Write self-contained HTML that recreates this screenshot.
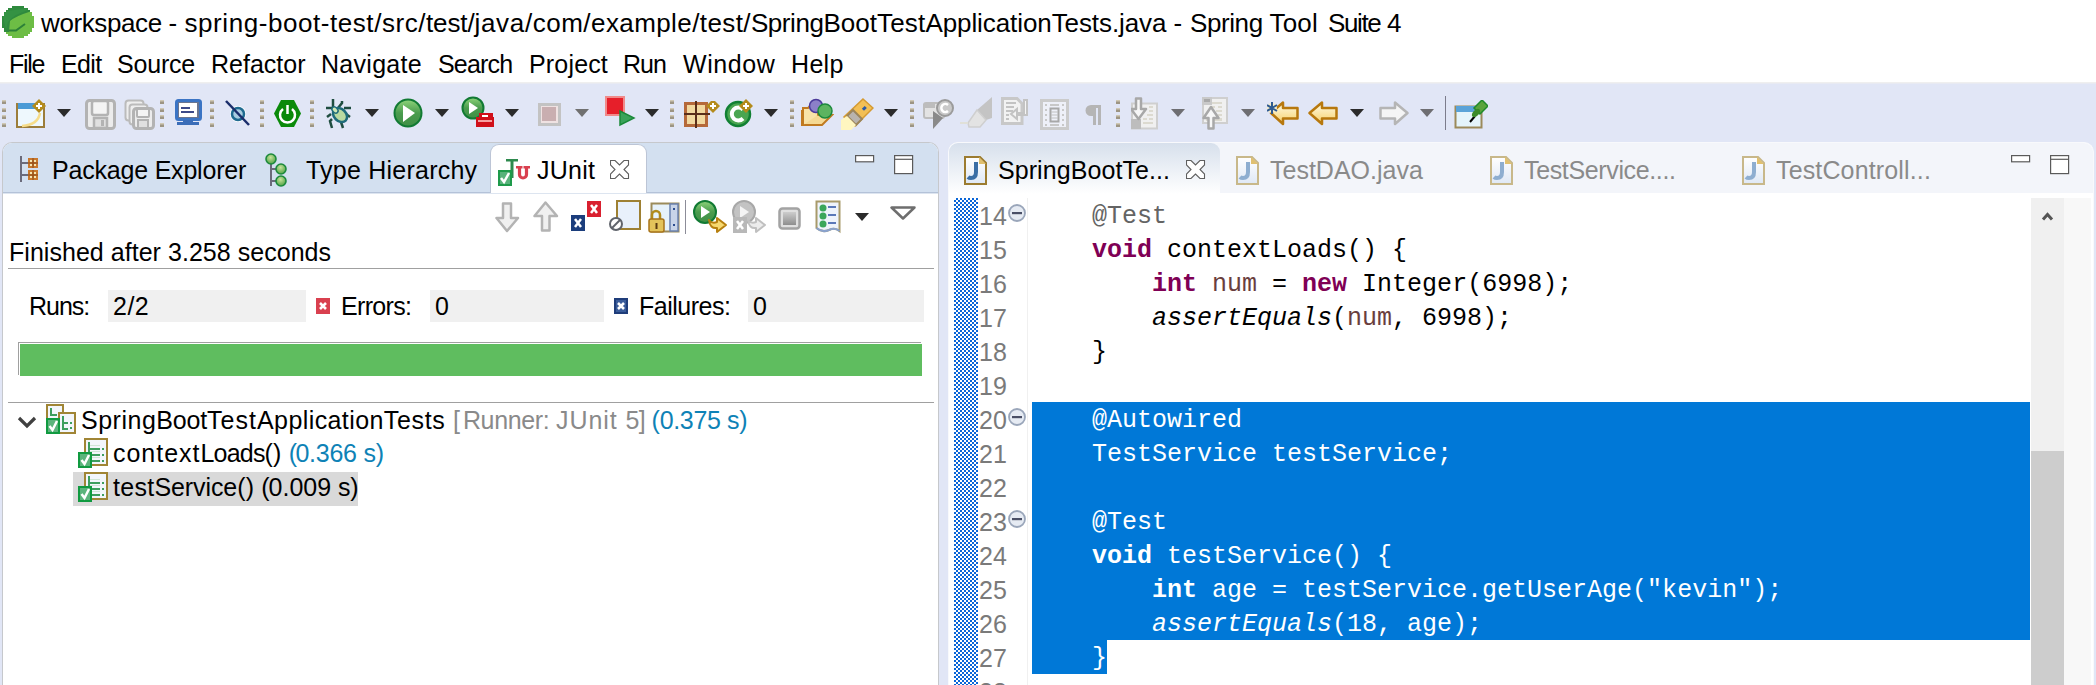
<!DOCTYPE html>
<html><head><meta charset="utf-8"><style>
html,body{margin:0;padding:0;}
body{width:2096px;height:685px;overflow:hidden;position:relative;background:#fff;font-family:"Liberation Sans",sans-serif;}
.t{position:absolute;white-space:pre;}
.r{position:absolute;}
</style></head><body>
<div class="r" style="left:0px;top:82px;width:2096px;height:603px;background:#e1e6f6;"></div>
<div class="r" style="left:0px;top:82px;width:2096px;height:1px;background:#efefef;"></div>
<div class="r" style="left:0px;top:83px;width:2096px;height:1px;background:#e8eaf2;"></div>
<div class="t" style="left:41px;top:10px;font-size:26px;line-height:26px;letter-spacing:-0.387px;color:#000;">workspace </div>
<div class="t" style="left:168.6px;top:10px;font-size:26px;line-height:26px;letter-spacing:0.013px;color:#000;">- </div>
<div class="t" style="left:184.5px;top:10px;font-size:26px;line-height:26px;letter-spacing:0.563px;color:#000;">spring-boot-test/src/</div>
<div class="t" style="left:426px;top:10px;font-size:26px;line-height:26px;letter-spacing:-0.122px;color:#000;">test/</div>
<div class="t" style="left:474.5px;top:10px;font-size:26px;line-height:26px;letter-spacing:0.679px;color:#000;">java/</div>
<div class="t" style="left:532.8px;top:10px;font-size:26px;line-height:26px;letter-spacing:0.468px;color:#000;">com/</div>
<div class="t" style="left:591px;top:10px;font-size:26px;line-height:26px;letter-spacing:0.416px;color:#000;">example/</div>
<div class="t" style="left:699.8px;top:10px;font-size:26px;line-height:26px;letter-spacing:0.398px;color:#000;">test/</div>
<div class="t" style="left:750.9px;top:10px;font-size:26px;line-height:26px;letter-spacing:-0.423px;color:#000;">Spring</div>
<div class="t" style="left:823.5px;top:10px;font-size:26px;line-height:26px;letter-spacing:0.008px;color:#000;">Boot</div>
<div class="t" style="left:877px;top:10px;font-size:26px;line-height:26px;letter-spacing:0.182px;color:#000;">Test</div>
<div class="t" style="left:925.4px;top:10px;font-size:26px;line-height:26px;letter-spacing:-0.085px;color:#000;">ApplicationTests.java </div>
<div class="t" style="left:1173.5px;top:10px;font-size:26px;line-height:26px;letter-spacing:0.312px;color:#000;">- </div>
<div class="t" style="left:1190px;top:10px;font-size:26px;line-height:26px;letter-spacing:-0.408px;color:#000;">Spring </div>
<div class="t" style="left:1269.5px;top:10px;font-size:26px;line-height:26px;letter-spacing:0.167px;color:#000;">Tool</div>
<div class="t" style="left:1328px;top:10px;font-size:26px;line-height:26px;letter-spacing:-1.400px;color:#000;">Suite</div>
<div class="t" style="left:1387px;top:10px;font-size:26px;line-height:26px;letter-spacing:4.600px;color:#000;">4</div>
<div class="t" style="left:9px;top:52px;font-size:25px;line-height:25px;letter-spacing:-1.333px;color:#000;font-family:"Liberation Sans", sans-serif;">File</div>
<div class="t" style="left:61px;top:52px;font-size:25px;line-height:25px;letter-spacing:-0.667px;color:#000;font-family:"Liberation Sans", sans-serif;">Edit</div>
<div class="t" style="left:117px;top:52px;font-size:25px;line-height:25px;letter-spacing:-0.200px;color:#000;font-family:"Liberation Sans", sans-serif;">Source</div>
<div class="t" style="left:211px;top:52px;font-size:25px;line-height:25px;letter-spacing:0.000px;color:#000;font-family:"Liberation Sans", sans-serif;">Refactor</div>
<div class="t" style="left:321px;top:52px;font-size:25px;line-height:25px;letter-spacing:0.286px;color:#000;font-family:"Liberation Sans", sans-serif;">Navigate</div>
<div class="t" style="left:438px;top:52px;font-size:25px;line-height:25px;letter-spacing:-0.800px;color:#000;font-family:"Liberation Sans", sans-serif;">Search</div>
<div class="t" style="left:529px;top:52px;font-size:25px;line-height:25px;letter-spacing:0.167px;color:#000;font-family:"Liberation Sans", sans-serif;">Project</div>
<div class="t" style="left:623px;top:52px;font-size:25px;line-height:25px;letter-spacing:-1.000px;color:#000;font-family:"Liberation Sans", sans-serif;">Run</div>
<div class="t" style="left:683px;top:52px;font-size:25px;line-height:25px;letter-spacing:0.600px;color:#000;font-family:"Liberation Sans", sans-serif;">Window</div>
<div class="t" style="left:791px;top:52px;font-size:25px;line-height:25px;letter-spacing:0.333px;color:#000;font-family:"Liberation Sans", sans-serif;">Help</div>
<div class="r" style="left:2px;top:142px;width:937px;height:543px;background:#ffffff;border:1px solid #c6c8cc;border-bottom:none;box-sizing:border-box;border-top-left-radius:10px;border-top-right-radius:10px;"></div>
<div class="r" style="left:3px;top:143px;width:935px;height:49px;background:#d3e0f0;border-top-left-radius:9px;border-top-right-radius:9px;"></div>
<div class="r" style="left:3px;top:192px;width:935px;height:1px;background:#b4c2d8;"></div>
<div class="r" style="left:3px;top:193px;width:935px;height:1px;background:#dde5f0;"></div>
<div class="r" style="left:490px;top:144px;width:157px;height:49px;background:#ffffff;border:1px solid #bcc5d6;border-bottom:none;box-sizing:border-box;border-top-left-radius:9px;border-top-right-radius:9px;"></div>
<div class="t" style="left:52px;top:158px;font-size:25px;line-height:25px;letter-spacing:-0.200px;color:#000;font-family:"Liberation Sans", sans-serif;">Package Explorer</div>
<div class="t" style="left:306px;top:158px;font-size:25px;line-height:25px;letter-spacing:0.231px;color:#000;font-family:"Liberation Sans", sans-serif;">Type Hierarchy</div>
<div class="t" style="left:537px;top:158px;font-size:25px;line-height:25px;letter-spacing:0.250px;color:#000;font-family:"Liberation Sans", sans-serif;">JUnit</div>
<div class="t" style="left:9px;top:240px;font-size:25px;line-height:25px;letter-spacing:0.037px;color:#000;font-family:"Liberation Sans", sans-serif;">Finished after 3.258 seconds</div>
<div class="r" style="left:8px;top:268px;width:926px;height:1px;background:#a0a0a0;"></div>
<div class="t" style="left:29px;top:294px;font-size:25px;line-height:25px;letter-spacing:-1.000px;color:#000;font-family:"Liberation Sans", sans-serif;">Runs:</div>
<div class="r" style="left:108px;top:290px;width:198px;height:32px;background:#f0f0f0;"></div>
<div class="t" style="left:113px;top:294px;font-size:25px;line-height:25px;letter-spacing:0.500px;color:#000;font-family:"Liberation Sans", sans-serif;">2/2</div>
<div class="t" style="left:341px;top:294px;font-size:25px;line-height:25px;letter-spacing:-0.667px;color:#000;font-family:"Liberation Sans", sans-serif;">Errors:</div>
<div class="r" style="left:430px;top:290px;width:174px;height:32px;background:#f0f0f0;"></div>
<div class="t" style="left:435px;top:294px;font-size:25px;line-height:25px;letter-spacing:0.000px;color:#000;font-family:"Liberation Sans", sans-serif;">0</div>
<div class="t" style="left:639px;top:294px;font-size:25px;line-height:25px;letter-spacing:-0.500px;color:#000;font-family:"Liberation Sans", sans-serif;">Failures:</div>
<div class="r" style="left:748px;top:290px;width:176px;height:32px;background:#f0f0f0;"></div>
<div class="t" style="left:753px;top:294px;font-size:25px;line-height:25px;letter-spacing:0.000px;color:#000;font-family:"Liberation Sans", sans-serif;">0</div>
<div class="r" style="left:18px;top:342px;width:903px;height:1px;background:#a0a0a0;"></div>
<div class="r" style="left:18px;top:342px;width:1px;height:33px;background:#a0a0a0;"></div>
<div class="r" style="left:20px;top:344px;width:902px;height:32px;background:#5fbd5f;"></div>
<div class="r" style="left:8px;top:402px;width:926px;height:1px;background:#a0a0a0;"></div>
<div class="r" style="left:73px;top:472px;width:285px;height:34px;background:#d9d9d9;"></div>
<div class="t" style="left:81px;top:408px;font-size:25px;line-height:25px;letter-spacing:0.506px;color:#000;">Spring</div>
<div class="t" style="left:156.3px;top:408px;font-size:25px;line-height:25px;letter-spacing:-0.209px;color:#000;">Boot</div>
<div class="t" style="left:206.9px;top:408px;font-size:25px;line-height:25px;letter-spacing:1.060px;color:#000;">Test</div>
<div class="t" style="left:257px;top:408px;font-size:25px;line-height:25px;letter-spacing:0.409px;color:#000;">Application</div>
<div class="t" style="left:383.8px;top:408px;font-size:25px;line-height:25px;letter-spacing:0.648px;color:#000;">Tests </div>
<div class="t" style="left:453px;top:408px;font-size:25px;line-height:25px;letter-spacing:2.947px;color:#8a8a8a;">[</div>
<div class="t" style="left:462.9px;top:408px;font-size:25px;line-height:25px;letter-spacing:-0.351px;color:#8a8a8a;">Runner: </div>
<div class="t" style="left:556px;top:408px;font-size:25px;line-height:25px;letter-spacing:0.932px;color:#8a8a8a;">JUnit </div>
<div class="t" style="left:625.5px;top:408px;font-size:25px;line-height:25px;letter-spacing:-0.604px;color:#8a8a8a;">5] </div>
<div class="t" style="left:651.5px;top:408px;font-size:25px;line-height:25px;letter-spacing:-0.028px;color:#0e82b6;">(</div>
<div class="t" style="left:659.8px;top:408px;font-size:25px;line-height:25px;letter-spacing:-0.389px;color:#0e82b6;">0.375 </div>
<div class="t" style="left:727px;top:408px;font-size:25px;line-height:25px;letter-spacing:-0.300px;color:#0e82b6;">s)</div>
<div class="t" style="left:113px;top:441px;font-size:25px;line-height:25px;letter-spacing:0.982px;color:#000;">context</div>
<div class="t" style="left:200.5px;top:441px;font-size:25px;line-height:25px;letter-spacing:-0.805px;color:#000;">Loads</div>
<div class="t" style="left:264.6px;top:441px;font-size:25px;line-height:25px;letter-spacing:0.164px;color:#000;">() </div>
<div class="t" style="left:288.7px;top:441px;font-size:25px;line-height:25px;letter-spacing:-1.628px;color:#0e82b6;">(</div>
<div class="t" style="left:295.4px;top:441px;font-size:25px;line-height:25px;letter-spacing:-0.239px;color:#0e82b6;">0.366 </div>
<div class="t" style="left:363.5px;top:441px;font-size:25px;line-height:25px;letter-spacing:-0.300px;color:#0e82b6;">s)</div>
<div class="t" style="left:113px;top:475px;font-size:25px;line-height:25px;letter-spacing:0.272px;color:#000;">test</div>
<div class="t" style="left:154.4px;top:475px;font-size:25px;line-height:25px;letter-spacing:-0.080px;color:#000;">Service</div>
<div class="t" style="left:237.2px;top:475px;font-size:25px;line-height:25px;letter-spacing:0.164px;color:#000;">() </div>
<div class="t" style="left:261.3px;top:475px;font-size:25px;line-height:25px;letter-spacing:-1.028px;color:#000;">(</div>
<div class="t" style="left:268.6px;top:475px;font-size:25px;line-height:25px;letter-spacing:-0.022px;color:#000;">0.009 </div>
<div class="t" style="left:338px;top:475px;font-size:25px;line-height:25px;letter-spacing:-0.300px;color:#000;">s)</div>
<div class="r" style="left:948px;top:142px;width:1146px;height:543px;background:#ffffff;border:1px solid #f8f9fc;border-bottom:none;box-sizing:border-box;border-top-left-radius:10px;border-top-right-radius:10px;"></div>
<div class="r" style="left:949px;top:143px;width:1144px;height:50px;background:#f3f5fa;border-top-left-radius:9px;border-top-right-radius:9px;"></div>
<div class="r" style="left:949px;top:143px;width:271px;height:51px;background:linear-gradient(#d7e0ec,#ffffff);border-top-left-radius:9px;border-top-right-radius:9px;"></div>
<div class="t" style="left:998px;top:158px;font-size:25px;line-height:25px;letter-spacing:0.071px;color:#000;font-family:"Liberation Sans", sans-serif;">SpringBootTe...</div>
<div class="t" style="left:1270px;top:158px;font-size:25px;line-height:25px;letter-spacing:0.000px;color:#8a8a8a;font-family:"Liberation Sans", sans-serif;">TestDAO.java</div>
<div class="t" style="left:1524px;top:158px;font-size:25px;line-height:25px;letter-spacing:-0.357px;color:#8a8a8a;font-family:"Liberation Sans", sans-serif;">TestService....</div>
<div class="t" style="left:1776px;top:158px;font-size:25px;line-height:25px;letter-spacing:0.143px;color:#8a8a8a;font-family:"Liberation Sans", sans-serif;">TestControll...</div>
<div class="r" style="left:954px;top:198px;width:24px;height:487px;background-image:conic-gradient(#0a66d8 25%,#fff 0 50%,#0a66d8 0 75%,#fff 0);background-size:4px 4px;"></div>
<div class="r" style="left:1027px;top:198px;width:1px;height:487px;background:#f0f0f0;"></div>
<div class="r" style="left:2031px;top:198px;width:33px;height:487px;background:#f0f0f0;"></div>
<div class="r" style="left:2031px;top:451px;width:33px;height:234px;background:#cdcdcd;"></div>
<div class="r" style="left:2064px;top:198px;width:27px;height:487px;background:#f8f8f8;"></div>
<div class="r" style="left:1032px;top:402px;width:998px;height:238px;background:#0078d7;"></div>
<div class="r" style="left:1032px;top:640px;width:75px;height:34px;background:#0078d7;"></div>
<div class="t" style="left:979px;top:204px;font-size:25px;line-height:25px;letter-spacing:0.000px;color:#7a7a7a;font-family:"Liberation Mono", monospace;">14</div>
<div class="t" style="left:979px;top:238px;font-size:25px;line-height:25px;letter-spacing:0.000px;color:#7a7a7a;font-family:"Liberation Mono", monospace;">15</div>
<div class="t" style="left:979px;top:272px;font-size:25px;line-height:25px;letter-spacing:0.000px;color:#7a7a7a;font-family:"Liberation Mono", monospace;">16</div>
<div class="t" style="left:979px;top:306px;font-size:25px;line-height:25px;letter-spacing:0.000px;color:#7a7a7a;font-family:"Liberation Mono", monospace;">17</div>
<div class="t" style="left:979px;top:340px;font-size:25px;line-height:25px;letter-spacing:0.000px;color:#7a7a7a;font-family:"Liberation Mono", monospace;">18</div>
<div class="t" style="left:979px;top:374px;font-size:25px;line-height:25px;letter-spacing:0.000px;color:#7a7a7a;font-family:"Liberation Mono", monospace;">19</div>
<div class="t" style="left:979px;top:408px;font-size:25px;line-height:25px;letter-spacing:0.000px;color:#7a7a7a;font-family:"Liberation Mono", monospace;">20</div>
<div class="t" style="left:979px;top:442px;font-size:25px;line-height:25px;letter-spacing:0.000px;color:#7a7a7a;font-family:"Liberation Mono", monospace;">21</div>
<div class="t" style="left:979px;top:476px;font-size:25px;line-height:25px;letter-spacing:0.000px;color:#7a7a7a;font-family:"Liberation Mono", monospace;">22</div>
<div class="t" style="left:979px;top:510px;font-size:25px;line-height:25px;letter-spacing:0.000px;color:#7a7a7a;font-family:"Liberation Mono", monospace;">23</div>
<div class="t" style="left:979px;top:544px;font-size:25px;line-height:25px;letter-spacing:0.000px;color:#7a7a7a;font-family:"Liberation Mono", monospace;">24</div>
<div class="t" style="left:979px;top:578px;font-size:25px;line-height:25px;letter-spacing:0.000px;color:#7a7a7a;font-family:"Liberation Mono", monospace;">25</div>
<div class="t" style="left:979px;top:612px;font-size:25px;line-height:25px;letter-spacing:0.000px;color:#7a7a7a;font-family:"Liberation Mono", monospace;">26</div>
<div class="t" style="left:979px;top:646px;font-size:25px;line-height:25px;letter-spacing:0.000px;color:#7a7a7a;font-family:"Liberation Mono", monospace;">27</div>
<div class="t" style="left:979px;top:680px;font-size:25px;line-height:25px;letter-spacing:0.000px;color:#7a7a7a;font-family:"Liberation Mono", monospace;">28</div>
<div class="t" style="left:1032px;top:204px;font-family:'Liberation Mono',monospace;font-size:25px;line-height:25px;"><span style="color:#646464;">    @Test</span></div>
<div class="t" style="left:1032px;top:238px;font-family:'Liberation Mono',monospace;font-size:25px;line-height:25px;"><span style="color:#000;">    </span><span style="color:#7f0055;font-weight:bold;">void</span><span style="color:#000;"> contextLoads() {</span></div>
<div class="t" style="left:1032px;top:272px;font-family:'Liberation Mono',monospace;font-size:25px;line-height:25px;"><span style="color:#000;">        </span><span style="color:#7f0055;font-weight:bold;">int</span><span style="color:#000;"> </span><span style="color:#6a3e3e;">num</span><span style="color:#000;"> = </span><span style="color:#7f0055;font-weight:bold;">new</span><span style="color:#000;"> Integer(6998);</span></div>
<div class="t" style="left:1032px;top:306px;font-family:'Liberation Mono',monospace;font-size:25px;line-height:25px;"><span style="color:#000;">        </span><span style="color:#000;font-style:italic;">assertEquals</span><span style="color:#000;">(</span><span style="color:#6a3e3e;">num</span><span style="color:#000;">, 6998);</span></div>
<div class="t" style="left:1032px;top:340px;font-family:'Liberation Mono',monospace;font-size:25px;line-height:25px;"><span style="color:#000;">    }</span></div>
<div class="t" style="left:1032px;top:408px;font-family:'Liberation Mono',monospace;font-size:25px;line-height:25px;"><span style="color:#fff;">    @Autowired</span></div>
<div class="t" style="left:1032px;top:442px;font-family:'Liberation Mono',monospace;font-size:25px;line-height:25px;"><span style="color:#fff;">    TestService testService;</span></div>
<div class="t" style="left:1032px;top:510px;font-family:'Liberation Mono',monospace;font-size:25px;line-height:25px;"><span style="color:#fff;">    @Test</span></div>
<div class="t" style="left:1032px;top:544px;font-family:'Liberation Mono',monospace;font-size:25px;line-height:25px;"><span style="color:#fff;">    </span><span style="color:#fff;font-weight:bold;">void</span><span style="color:#fff;"> testService() {</span></div>
<div class="t" style="left:1032px;top:578px;font-family:'Liberation Mono',monospace;font-size:25px;line-height:25px;"><span style="color:#fff;">        </span><span style="color:#fff;font-weight:bold;">int</span><span style="color:#fff;"> age = testService.getUserAge("kevin");</span></div>
<div class="t" style="left:1032px;top:612px;font-family:'Liberation Mono',monospace;font-size:25px;line-height:25px;"><span style="color:#fff;">        </span><span style="color:#fff;font-style:italic;">assertEquals</span><span style="color:#fff;">(18, age);</span></div>
<div class="t" style="left:1032px;top:646px;font-family:'Liberation Mono',monospace;font-size:25px;line-height:25px;"><span style="color:#fff;">    }</span></div>
<svg class="r" style="left:2px;top:6px" width="33" height="33" viewBox="0 0 33 33"><defs><clipPath id="sc"><path d="M10 0H22V2H26V4H28V6H30V10H32V22H30V26H28V28H26V30H22V32H10V30H6V28H4V26H2V22H0V10H2V6H4V4H6V2H10Z"/></clipPath></defs>
<g clip-path="url(#sc)"><rect width="33" height="33" fill="#6dbd45"/>
<path d="M0 0H33V4L27 6Q14 10 8 15L7 26H0Z" fill="#2f8a3e"/>
<path d="M0 6L12 4L26 2V4L14 9Q9 12 6 16L4 24Z" fill="#3a9a48" opacity=".5"/>
<path d="M7 24.5H14L23 18" stroke="#2c8038" stroke-width="2" fill="none"/></g></svg>
<svg class="r" style="left:2px;top:96px" width="4" height="32" viewBox="0 0 4 32"><rect x="0" y="4" width="4" height="4" fill="#9d9583"/><rect x="0" y="4" width="4" height="1.5" fill="#cfc8b4"/><rect x="0" y="12" width="4" height="4" fill="#9d9583"/><rect x="0" y="12" width="4" height="1.5" fill="#cfc8b4"/><rect x="0" y="19" width="4" height="4" fill="#9d9583"/><rect x="0" y="19" width="4" height="1.5" fill="#cfc8b4"/><rect x="0" y="27" width="4" height="4" fill="#9d9583"/><rect x="0" y="27" width="4" height="1.5" fill="#cfc8b4"/></svg>
<svg class="r" style="left:160px;top:96px" width="4" height="32" viewBox="0 0 4 32"><rect x="0" y="4" width="4" height="4" fill="#9d9583"/><rect x="0" y="4" width="4" height="1.5" fill="#cfc8b4"/><rect x="0" y="12" width="4" height="4" fill="#9d9583"/><rect x="0" y="12" width="4" height="1.5" fill="#cfc8b4"/><rect x="0" y="19" width="4" height="4" fill="#9d9583"/><rect x="0" y="19" width="4" height="1.5" fill="#cfc8b4"/><rect x="0" y="27" width="4" height="4" fill="#9d9583"/><rect x="0" y="27" width="4" height="1.5" fill="#cfc8b4"/></svg>
<svg class="r" style="left:210px;top:96px" width="4" height="32" viewBox="0 0 4 32"><rect x="0" y="4" width="4" height="4" fill="#9d9583"/><rect x="0" y="4" width="4" height="1.5" fill="#cfc8b4"/><rect x="0" y="12" width="4" height="4" fill="#9d9583"/><rect x="0" y="12" width="4" height="1.5" fill="#cfc8b4"/><rect x="0" y="19" width="4" height="4" fill="#9d9583"/><rect x="0" y="19" width="4" height="1.5" fill="#cfc8b4"/><rect x="0" y="27" width="4" height="4" fill="#9d9583"/><rect x="0" y="27" width="4" height="1.5" fill="#cfc8b4"/></svg>
<svg class="r" style="left:260px;top:96px" width="4" height="32" viewBox="0 0 4 32"><rect x="0" y="4" width="4" height="4" fill="#9d9583"/><rect x="0" y="4" width="4" height="1.5" fill="#cfc8b4"/><rect x="0" y="12" width="4" height="4" fill="#9d9583"/><rect x="0" y="12" width="4" height="1.5" fill="#cfc8b4"/><rect x="0" y="19" width="4" height="4" fill="#9d9583"/><rect x="0" y="19" width="4" height="1.5" fill="#cfc8b4"/><rect x="0" y="27" width="4" height="4" fill="#9d9583"/><rect x="0" y="27" width="4" height="1.5" fill="#cfc8b4"/></svg>
<svg class="r" style="left:310px;top:96px" width="4" height="32" viewBox="0 0 4 32"><rect x="0" y="4" width="4" height="4" fill="#9d9583"/><rect x="0" y="4" width="4" height="1.5" fill="#cfc8b4"/><rect x="0" y="12" width="4" height="4" fill="#9d9583"/><rect x="0" y="12" width="4" height="1.5" fill="#cfc8b4"/><rect x="0" y="19" width="4" height="4" fill="#9d9583"/><rect x="0" y="19" width="4" height="1.5" fill="#cfc8b4"/><rect x="0" y="27" width="4" height="4" fill="#9d9583"/><rect x="0" y="27" width="4" height="1.5" fill="#cfc8b4"/></svg>
<svg class="r" style="left:670px;top:96px" width="4" height="32" viewBox="0 0 4 32"><rect x="0" y="4" width="4" height="4" fill="#9d9583"/><rect x="0" y="4" width="4" height="1.5" fill="#cfc8b4"/><rect x="0" y="12" width="4" height="4" fill="#9d9583"/><rect x="0" y="12" width="4" height="1.5" fill="#cfc8b4"/><rect x="0" y="19" width="4" height="4" fill="#9d9583"/><rect x="0" y="19" width="4" height="1.5" fill="#cfc8b4"/><rect x="0" y="27" width="4" height="4" fill="#9d9583"/><rect x="0" y="27" width="4" height="1.5" fill="#cfc8b4"/></svg>
<svg class="r" style="left:790px;top:96px" width="4" height="32" viewBox="0 0 4 32"><rect x="0" y="4" width="4" height="4" fill="#9d9583"/><rect x="0" y="4" width="4" height="1.5" fill="#cfc8b4"/><rect x="0" y="12" width="4" height="4" fill="#9d9583"/><rect x="0" y="12" width="4" height="1.5" fill="#cfc8b4"/><rect x="0" y="19" width="4" height="4" fill="#9d9583"/><rect x="0" y="19" width="4" height="1.5" fill="#cfc8b4"/><rect x="0" y="27" width="4" height="4" fill="#9d9583"/><rect x="0" y="27" width="4" height="1.5" fill="#cfc8b4"/></svg>
<svg class="r" style="left:910px;top:96px" width="4" height="32" viewBox="0 0 4 32"><rect x="0" y="4" width="4" height="4" fill="#9d9583"/><rect x="0" y="4" width="4" height="1.5" fill="#cfc8b4"/><rect x="0" y="12" width="4" height="4" fill="#9d9583"/><rect x="0" y="12" width="4" height="1.5" fill="#cfc8b4"/><rect x="0" y="19" width="4" height="4" fill="#9d9583"/><rect x="0" y="19" width="4" height="1.5" fill="#cfc8b4"/><rect x="0" y="27" width="4" height="4" fill="#9d9583"/><rect x="0" y="27" width="4" height="1.5" fill="#cfc8b4"/></svg>
<svg class="r" style="left:1116px;top:96px" width="4" height="32" viewBox="0 0 4 32"><rect x="0" y="4" width="4" height="4" fill="#9d9583"/><rect x="0" y="4" width="4" height="1.5" fill="#cfc8b4"/><rect x="0" y="12" width="4" height="4" fill="#9d9583"/><rect x="0" y="12" width="4" height="1.5" fill="#cfc8b4"/><rect x="0" y="19" width="4" height="4" fill="#9d9583"/><rect x="0" y="19" width="4" height="1.5" fill="#cfc8b4"/><rect x="0" y="27" width="4" height="4" fill="#9d9583"/><rect x="0" y="27" width="4" height="1.5" fill="#cfc8b4"/></svg>
<svg class="r" style="left:16px;top:99px" width="30" height="30" viewBox="0 0 30 30"><rect x="1" y="5" width="27" height="23" fill="#eef8fd" stroke="#9c7d3a" stroke-width="2"/>
<rect x="2" y="4" width="20" height="6" fill="#4a9ad6"/><path d="M6 27Q22 26 24 14" stroke="#f6dd8a" stroke-width="2.5" fill="none"/>
<path d="M23 7L30 0L37 7L30 14Z" transform="translate(-7 0)" fill="#b48b1c"/><path d="M20 7H26M23 4V10" stroke="#fff" stroke-width="2"/></svg>
<svg class="r" style="left:57px;top:109px" width="14" height="8" viewBox="0 0 14 8"><path d="M0 0H14L7 8Z" fill="#2b2b2b"/></svg>
<svg class="r" style="left:85px;top:99px" width="31" height="31" viewBox="0 0 31 31"><rect x="1.5" y="1.5" width="28" height="28" rx="3" fill="#ececec" stroke="#b3b3b3" stroke-width="3"/>
<rect x="7" y="2" width="16" height="14" rx="2" fill="#f4f4f4" stroke="#b3b3b3" stroke-width="2.5"/>
<rect x="9" y="19" width="13" height="10" fill="#e0e0e0" stroke="#b3b3b3" stroke-width="2.5"/><rect x="16" y="21" width="3" height="6" fill="#b3b3b3"/></svg>
<svg class="r" style="left:124px;top:99px" width="31" height="31" viewBox="0 0 31 31"><rect x="1.5" y="1.5" width="18" height="20" rx="3" fill="#eee" stroke="#bbb" stroke-width="2"/>
<rect x="5.5" y="5.5" width="18" height="20" rx="3" fill="#eee" stroke="#bbb" stroke-width="2"/>
<rect x="9.5" y="9.5" width="20" height="20" rx="3" fill="#ececec" stroke="#b3b3b3" stroke-width="3"/>
<rect x="13" y="10" width="12" height="8" rx="1" fill="#f4f4f4" stroke="#b3b3b3" stroke-width="2"/><rect x="14" y="21" width="10" height="8" fill="#e0e0e0" stroke="#b3b3b3" stroke-width="2"/></svg>
<svg class="r" style="left:175px;top:99px" width="27" height="27" viewBox="0 0 27 27"><rect x="1.5" y="1.5" width="24" height="19" rx="2" fill="#6a7590" stroke="#3b74c4" stroke-width="3"/>
<rect x="4" y="4" width="18" height="14" fill="#fff"/><rect x="6" y="8" width="9" height="2" fill="#3c4a8a"/><rect x="6" y="12" width="13" height="2" fill="#3c4a8a"/>
<rect x="8" y="21" width="10" height="3" fill="#3b6db8"/><rect x="2" y="23" width="22" height="3" fill="#3b6db8"/></svg>
<svg class="r" style="left:224px;top:100px" width="27" height="27" viewBox="0 0 27 27"><circle cx="14" cy="14" r="8" fill="#fff"/><circle cx="14" cy="14" r="6" fill="#a9cde0" stroke="#1f6b90" stroke-width="2.5"/>
<path d="M2 1L25 25" stroke="#1a2d6b" stroke-width="2.5"/></svg>
<svg class="r" style="left:274px;top:100px" width="27" height="27" viewBox="0 0 27 27"><path d="M7 0H20L27 13.5L20 27H7L0 13.5Z" fill="#0a8a0a"/>
<path d="M9 9A7.5 7.5 0 1 0 18 9" stroke="#fff" stroke-width="2.5" fill="none"/><path d="M13.5 5V14" stroke="#fff" stroke-width="2.5"/></svg>
<svg class="r" style="left:324px;top:99px" width="31" height="31" viewBox="0 0 31 31"><g stroke="#1f4d40" stroke-width="2.5" fill="none"><path d="M9 9V0"/><path d="M14 9L18 4V2"/><path d="M2 9H9"/><path d="M20 9H27"/>
<path d="M3 18L7 15"/><path d="M22 15L26 18"/><path d="M8 20L6 22L8 29"/><path d="M17 23L19 29"/></g>
<ellipse cx="16" cy="16" rx="8" ry="6" transform="rotate(45 16 16)" fill="#b9d9a1" stroke="#1f6b7a" stroke-width="2.5"/>
<ellipse cx="11" cy="11" rx="3.5" ry="2.5" transform="rotate(45 11 11)" fill="#cde6b6" stroke="#1f6b7a" stroke-width="1.5"/></svg>
<svg class="r" style="left:365px;top:109px" width="14" height="8" viewBox="0 0 14 8"><path d="M0 0H14L7 8Z" fill="#2b2b2b"/></svg>
<svg class="r" style="left:393px;top:98px" width="30" height="30" viewBox="0 0 30 30"><defs><linearGradient id="gr" x1="0" y1="0" x2="0" y2="1"><stop offset="0" stop-color="#8fd47a"/><stop offset=".5" stop-color="#4a9c4e"/><stop offset="1" stop-color="#3f8f45"/></linearGradient></defs>
<circle cx="15" cy="15" r="13.5" fill="url(#gr)" stroke="#117a33" stroke-width="2"/><path d="M10 7L22 15L10 24Z" fill="#fff"/></svg>
<svg class="r" style="left:435px;top:109px" width="14" height="8" viewBox="0 0 14 8"><path d="M0 0H14L7 8Z" fill="#2b2b2b"/></svg>
<svg class="r" style="left:461px;top:96px" width="35" height="32" viewBox="0 0 35 32"><circle cx="12" cy="12" r="10.5" fill="url(#gr)" stroke="#117a33" stroke-width="2"/><path d="M8 6L17 12L8 18Z" fill="#fff"/>
<rect x="18" y="17" width="14" height="4" fill="#d0101a"/><rect x="15" y="21" width="18" height="10" fill="#d0101a"/><rect x="21" y="19" width="6" height="2" fill="#fff"/>
<rect x="17" y="24" width="14" height="2" fill="#f7a0a0"/></svg>
<svg class="r" style="left:505px;top:109px" width="14" height="8" viewBox="0 0 14 8"><path d="M0 0H14L7 8Z" fill="#2b2b2b"/></svg>
<svg class="r" style="left:538px;top:103px" width="23" height="23" viewBox="0 0 23 23"><rect x="1.5" y="1.5" width="20" height="20" fill="#efe2e2" stroke="#c3c3c3" stroke-width="3"/><rect x="4" y="4" width="14" height="14" fill="#c9aeb0"/></svg>
<svg class="r" style="left:575px;top:109px" width="14" height="8" viewBox="0 0 14 8"><path d="M0 0H14L7 8Z" fill="#707070"/></svg>
<svg class="r" style="left:605px;top:96px" width="31" height="31" viewBox="0 0 31 31"><rect x="1" y="1" width="18" height="18" fill="#e61f2a" stroke="#f08a8a" stroke-width="2"/>
<path d="M15 15V29L29 22Z" fill="#3aa35a" stroke="#1b8a3a" stroke-width="1.5"/></svg>
<svg class="r" style="left:645px;top:109px" width="14" height="8" viewBox="0 0 14 8"><path d="M0 0H14L7 8Z" fill="#2b2b2b"/></svg>
<svg class="r" style="left:684px;top:101px" width="36" height="28" viewBox="0 0 36 28"><rect x="1.5" y="2.5" width="21" height="22" fill="#f2d9a0" stroke="#b5693a" stroke-width="3"/>
<path d="M12 0V27M0 13H26" stroke="#5a2e1a" stroke-width="2"/>
<path d="M22 5L29 -2L36 5L29 12Z" transform="translate(0 0)" fill="#b48b1c"/><path d="M26 5H32M29 2V8" stroke="#fff" stroke-width="2"/></svg>
<svg class="r" style="left:724px;top:99px" width="36" height="30" viewBox="0 0 36 30"><circle cx="14" cy="15" r="12" fill="#4aa550" stroke="#118033" stroke-width="2.5"/>
<path d="M19 10.5A6.5 6.5 0 1 0 19 19.5" stroke="#fff" stroke-width="4" fill="none"/>
<path d="M15 7L22 0L29 7L22 14Z" fill="#b48b1c"/><path d="M19 7H25M22 4V10" stroke="#fff" stroke-width="2"/></svg>
<svg class="r" style="left:764px;top:109px" width="14" height="8" viewBox="0 0 14 8"><path d="M0 0H14L7 8Z" fill="#2b2b2b"/></svg>
<svg class="r" style="left:800px;top:98px" width="34" height="30" viewBox="0 0 34 30"><path d="M2 12V27H22L32 17H8L2 27" fill="#f5d993" stroke="#c07a20" stroke-width="2"/><path d="M3 27V10H8L10 8H18V17" fill="#f8e3a8" stroke="#c07a20" stroke-width="2"/>
<circle cx="16" cy="8" r="6.5" fill="#8c80c8" stroke="#4b3a9a" stroke-width="1.5"/><circle cx="25" cy="13" r="7" fill="#5cb460" stroke="#1c8a3c" stroke-width="1.5"/></svg>
<svg class="r" style="left:841px;top:98px" width="33" height="32" viewBox="0 0 33 32"><path d="M22 1L32 10L14 28L3 19Z" fill="#f2bf55" stroke="#d59a30" stroke-width="1.5"/>
<path d="M12 12L21 21L15 27L6 18Z" fill="#b9b3ad" stroke="#9c855a" stroke-width="2"/>
<path d="M6 18L15 27L10 32H0V22Z" fill="#fff6c0"/><rect x="22" y="8" width="3" height="4" transform="rotate(45 23 10)" fill="#2a5aa8"/></svg>
<svg class="r" style="left:884px;top:109px" width="14" height="8" viewBox="0 0 14 8"><path d="M0 0H14L7 8Z" fill="#2b2b2b"/></svg>
<svg class="r" style="left:923px;top:98px" width="31" height="32" viewBox="0 0 31 32"><rect x="1" y="5" width="20" height="15" rx="2" fill="#e3e3e3" stroke="#bdbdbd" stroke-width="2"/><rect x="0" y="6" width="12" height="4" fill="#bdbdbd"/>
<circle cx="22" cy="10" r="8" fill="#c9c9c9" stroke="#9b9b9b" stroke-width="2"/><path d="M25 7A4 4 0 1 0 25 13" stroke="#fff" stroke-width="2.5" fill="none"/>
<path d="M10 13V31L20 20Z" fill="#8a8a8a"/></svg>
<svg class="r" style="left:960px;top:96px" width="33" height="32" viewBox="0 0 33 32"><path d="M32 1V22L26 24L17 14Z" fill="#c4c4c4"/><path d="M17 14L26 24L20 31H9L8 27Z" fill="#e3e3e3" stroke="#cfcfcf" stroke-width="1.5"/><path d="M0 27H8" stroke="#e0e0d8" stroke-width="2"/></svg>
<svg class="r" style="left:1001px;top:97px" width="31" height="29" viewBox="0 0 31 29"><path d="M1.5 1.5H16L21 6.5V26.5H1.5Z" fill="#f2f2f2" stroke="#c8c8c8" stroke-width="3"/>
<g stroke="#c3c3c3" stroke-width="2"><path d="M5 6H15"/><path d="M5 10H13"/><path d="M5 14H12"/><path d="M5 18H8"/><path d="M5 22H8"/></g>
<path d="M23 3V16H16V12L10 17L16 22V18H26V3Z" fill="#f5f5f5" stroke="#c3c3c3" stroke-width="2"/></svg>
<svg class="r" style="left:1040px;top:99px" width="29" height="31" viewBox="0 0 29 31"><rect x="1.5" y="1.5" width="26" height="28" fill="#eef0f8" stroke="#cbcbcb" stroke-width="3"/>
<g fill="#c8c8c8"><rect x="5" y="5" width="2" height="2"/><rect x="5" y="10" width="2" height="2"/><rect x="5" y="15" width="2" height="2"/><rect x="5" y="20" width="2" height="2"/><rect x="5" y="25" width="2" height="2"/>
<rect x="22" y="5" width="2" height="2"/><rect x="22" y="10" width="2" height="2"/><rect x="22" y="15" width="2" height="2"/><rect x="22" y="20" width="2" height="2"/><rect x="22" y="25" width="2" height="2"/>
<rect x="10" y="5" width="9" height="2"/><rect x="10" y="25" width="9" height="2"/></g><rect x="10.5" y="9.5" width="8" height="13" fill="none" stroke="#a8a8a8" stroke-width="2"/><path d="M11 13H18M11 16H18M11 19H18" stroke="#c0c0c0"/></svg>
<svg class="r" style="left:1085px;top:105px" width="17" height="21" viewBox="0 0 17 21"><path d="M16 0H6A5.5 5.5 0 0 0 6 11H8V20H11V3H13V20H16Z" fill="#b5b5b5"/></svg>
<svg class="r" style="left:1131px;top:97px" width="28" height="33" viewBox="0 0 28 33"><rect x="1" y="6.5" width="25" height="25" fill="#f0f0f0" stroke="#cfcfcf" stroke-width="2"/><rect x="0" y="22" width="10" height="10" fill="#bdbdbd"/>
<g stroke="#dcdad0" stroke-width="2"><path d="M18 10H22M18 14H22M16 18H22M12 22H16M18 22H22M12 26H22"/></g>
<path d="M5 1.5H10V12H15L7.5 22L0 12H5Z" fill="#f7f7f7" stroke="#a8a8a8" stroke-width="2.5" stroke-linejoin="round"/></svg>
<svg class="r" style="left:1171px;top:109px" width="14" height="8" viewBox="0 0 14 8"><path d="M0 0H14L7 8Z" fill="#6e6e72"/></svg>
<svg class="r" style="left:1200px;top:97px" width="29" height="33" viewBox="0 0 29 33"><rect x="3" y="1" width="24" height="25" fill="#f0f0f0" stroke="#cfcfcf" stroke-width="2"/><rect x="2" y="0" width="10" height="8" fill="#c9c9c9"/><rect x="4" y="2" width="6" height="3" fill="#a9a9a9"/>
<g stroke="#dcdad0" stroke-width="2"><path d="M12 6H22M12 10H15M18 10H22M16 14H22M18 18H22M18 22H22M6 23H22"/></g>
<path d="M8.5 31.5H13.5V21H18.5L11 10L3.5 21H8.5Z" fill="#f7f7f7" stroke="#a8a8a8" stroke-width="2.5" stroke-linejoin="round"/></svg>
<svg class="r" style="left:1241px;top:109px" width="14" height="8" viewBox="0 0 14 8"><path d="M0 0H14L7 8Z" fill="#6e6e72"/></svg>
<svg class="r" style="left:1267px;top:101px" width="33" height="25" viewBox="0 0 33 25"><defs><linearGradient id="ay" x1="0" y1="0" x2="0" y2="1"><stop offset="0" stop-color="#fffbe6"/><stop offset="1" stop-color="#f6d16a"/></linearGradient></defs><path d="M4 12L16 1.5V7H30.5V17.5H16V23Z" fill="url(#ay)" stroke="#b7780d" stroke-width="2.5" stroke-linejoin="round"/>
<circle cx="5" cy="7" r="5" fill="#f5ecc8"/><g stroke="#2e5a90" stroke-width="2"><path d="M5 1V13M0 4L10 10M10 4L0 10"/></g></svg>
<svg class="r" style="left:1308px;top:101px" width="30" height="25" viewBox="0 0 30 25"><path d="M1.5 12L14 1.5V7H28.5V17.5H14V23Z" fill="url(#ay)" stroke="#b7780d" stroke-width="2.5" stroke-linejoin="round"/></svg>
<svg class="r" style="left:1350px;top:109px" width="14" height="8" viewBox="0 0 14 8"><path d="M0 0H14L7 8Z" fill="#2b2b2b"/></svg>
<svg class="r" style="left:1379px;top:101px" width="30" height="25" viewBox="0 0 30 25"><path d="M28.5 12L16 1.5V7H1.5V17.5H16V23Z" fill="#f5f5f5" stroke="#b5b5b5" stroke-width="2.5" stroke-linejoin="round"/></svg>
<svg class="r" style="left:1420px;top:109px" width="14" height="8" viewBox="0 0 14 8"><path d="M0 0H14L7 8Z" fill="#6e6e72"/></svg>
<div class="r" style="left:1445px;top:96px;width:1px;height:34px;background:#7c7c8c;"></div>
<svg class="r" style="left:1454px;top:100px" width="34" height="29" viewBox="0 0 34 29"><rect x="1.5" y="6.5" width="26" height="21" fill="#e4f4fb" stroke="#9c8a5a" stroke-width="2"/><rect x="2" y="6" width="25" height="6" fill="#5aa3d8"/>
<path d="M21 16L16 22" stroke="#000" stroke-width="2"/><path d="M20 8L28 0L34 6L26 14Z" fill="#5aa43c" stroke="#1f8a2a" stroke-width="1.5"/><ellipse cx="22" cy="13" rx="3" ry="5" transform="rotate(45 22 13)" fill="#3a8a2a"/></svg>
<svg class="r" style="left:19px;top:155px" width="20" height="28" viewBox="0 0 20 28"><rect x="1" y="1" width="2" height="26" fill="#6b6b7b"/><rect x="3" y="7" width="6" height="2" fill="#6b6b7b"/><rect x="3" y="19" width="6" height="2" fill="#6b6b7b"/>
<rect x="9" y="3" width="10" height="10" fill="#c9782c"/><rect x="9" y="15" width="10" height="10" fill="#c9782c"/>
<path d="M14 3V13M9 8H19M14 15V25M9 20H19" stroke="#8a4a1a" stroke-width="1"/>
<g fill="#f6e6b0"><rect x="11" y="5" width="2" height="2"/><rect x="15" y="5" width="2" height="2"/><rect x="11" y="9" width="2" height="2"/><rect x="15" y="9" width="2" height="2"/>
<rect x="11" y="17" width="2" height="2"/><rect x="15" y="17" width="2" height="2"/><rect x="11" y="21" width="2" height="2"/><rect x="15" y="21" width="2" height="2"/></g></svg>
<svg class="r" style="left:264px;top:152px" width="24" height="36" viewBox="0 0 24 36"><defs><radialGradient id="gb" cx=".45" cy=".35" r=".6"><stop offset="0" stop-color="#c6e39a"/><stop offset="1" stop-color="#5aa84c"/></radialGradient></defs>
<path d="M7 11V34M8 17H14M8 29H14" stroke="#6a6a7a" stroke-width="2"/>
<circle cx="7" cy="7" r="5" fill="url(#gb)" stroke="#1c8a3c" stroke-width="1.6"/><circle cx="17" cy="17" r="5" fill="url(#gb)" stroke="#1c8a3c" stroke-width="1.6"/><circle cx="17" cy="29" r="5" fill="url(#gb)" stroke="#1c8a3c" stroke-width="1.6"/></svg>
<svg class="r" style="left:497px;top:159px" width="34" height="28" viewBox="0 0 34 28"><path d="M9 1H21M15 1V19" stroke="#2e8a4e" stroke-width="3"/>
<path d="M19 8.2H25.5M26.5 8.2H33" stroke="#d9404f" stroke-width="2.4"/><path d="M22.5 8V15.5A3.5 3.5 0 0 0 29.5 15.5V8" stroke="#d9404f" stroke-width="3.2" fill="none"/>
<rect x="1" y="11" width="14" height="16" fill="#1e9a4a"/><rect x="3" y="13" width="10" height="12" fill="#58b27a"/><path d="M4 19L7 23L12 14" stroke="#fff" stroke-width="2.5" fill="none"/></svg>
<svg class="r" style="left:610px;top:160px" width="20" height="20" viewBox="0 0 20 20"><path d="M0.5 0.5H5L9.5 5L14 0.5H18.5V5L14 9.5L18.5 14V18.5H14L9.5 14L5 18.5H0.5V14L5 9.5L0.5 5Z" fill="#fff" stroke="#5f5f5f" stroke-width="1.1"/></svg>
<svg class="r" style="left:1186px;top:160px" width="20" height="20" viewBox="0 0 20 20"><path d="M0.5 0.5H5L9.5 5L14 0.5H18.5V5L14 9.5L18.5 14V18.5H14L9.5 14L5 18.5H0.5V14L5 9.5L0.5 5Z" fill="#fff" stroke="#5f5f5f" stroke-width="1.1"/></svg>
<svg class="r" style="left:855px;top:155px" width="20" height="8" viewBox="0 0 20 8"><rect x="0.6" y="0.6" width="18" height="6.2" fill="#fff" stroke="#5a5a5a" stroke-width="1.2"/></svg>
<svg class="r" style="left:894px;top:155px" width="20" height="20" viewBox="0 0 20 20"><rect x="0.6" y="0.6" width="18" height="18" fill="#fff" stroke="#5a5a5a" stroke-width="1.2"/><path d="M1 4.3H19" stroke="#5a5a5a" stroke-width="1.2"/></svg>
<svg class="r" style="left:2011px;top:155px" width="20" height="8" viewBox="0 0 20 8"><rect x="0.6" y="0.6" width="18" height="6.2" fill="#fff" stroke="#5a5a5a" stroke-width="1.2"/></svg>
<svg class="r" style="left:2050px;top:155px" width="20" height="20" viewBox="0 0 20 20"><rect x="0.6" y="0.6" width="18" height="18" fill="#fff" stroke="#5a5a5a" stroke-width="1.2"/><path d="M1 4.3H19" stroke="#5a5a5a" stroke-width="1.2"/></svg>
<svg class="r" style="left:495px;top:202px" width="25" height="31" viewBox="0 0 25 31"><path d="M8 1.5H16V16H23L12 29L1.5 16H8Z" fill="#f0f0f0" stroke="#b3b3b3" stroke-width="2.5" stroke-linejoin="round"/></svg>
<svg class="r" style="left:533px;top:201px" width="26" height="31" viewBox="0 0 26 31"><path d="M9 29.5H16.5V15H24L12.5 1.5L1.5 15H9Z" fill="#f0f0f0" stroke="#b3b3b3" stroke-width="2.5" stroke-linejoin="round"/></svg>
<svg class="r" style="left:571px;top:201px" width="31" height="31" viewBox="0 0 31 31"><rect x="0" y="14" width="14" height="16" fill="#1b3d7c"/><path d="M4 18L10 26M10 18L4 26" stroke="#fff" stroke-width="2.5"/>
<rect x="16" y="0" width="14" height="16" fill="#d9202f"/><path d="M20 4L26 12M26 4L20 12" stroke="#fff" stroke-width="2.5"/></svg>
<svg class="r" style="left:609px;top:200px" width="32" height="32" viewBox="0 0 32 32"><rect x="8" y="1" width="23" height="28" fill="#e8f0fb" stroke="#9e8032" stroke-width="2"/>
<circle cx="7" cy="24" r="6" fill="#fff" stroke="#60646c" stroke-width="2"/><path d="M3 28L11 20" stroke="#60646c" stroke-width="2"/></svg>
<svg class="r" style="left:648px;top:202px" width="32" height="32" viewBox="0 0 32 32"><rect x="3.5" y="1.5" width="27" height="28" fill="#e6f2fb" stroke="#9c8b5a" stroke-width="2"/><rect x="22" y="2" width="8" height="27" fill="#c8d4e8" stroke="#6b83b0" stroke-width="1.5"/>
<rect x="25" y="6" width="2" height="2" fill="#2b4c90"/><rect x="25" y="22" width="2" height="2" fill="#2b4c90"/>
<path d="M4 18V13A4 4 0 0 1 12 13V18" stroke="#b18b1b" stroke-width="2.5" fill="none"/><rect x="1" y="17" width="15" height="13" rx="2" fill="#e3c35a" stroke="#a8741a" stroke-width="1.5"/><rect x="7.5" y="21" width="2" height="6" fill="#5a3a10"/></svg>
<div class="r" style="left:685px;top:200px;width:1px;height:34px;background:#8c8c98;"></div>
<svg class="r" style="left:693px;top:200px" width="35" height="35" viewBox="0 0 35 35"><circle cx="12" cy="12" r="11" fill="url(#gr)" stroke="#117a33" stroke-width="2"/><path d="M8 6L17 12L8 18Z" fill="#fff"/>
<path d="M16 20Q19 24 24 22V18L33 25L24 32V28Q17 29 16 20Z" fill="#f7d970" stroke="#b7800f" stroke-width="2" stroke-linejoin="round"/></svg>
<svg class="r" style="left:732px;top:200px" width="35" height="35" viewBox="0 0 35 35"><circle cx="12" cy="12" r="11" fill="#c3c3c3" stroke="#a8a8a8" stroke-width="2"/><path d="M8 6L17 12L8 18Z" fill="#f4f4f4"/>
<rect x="1" y="17" width="14" height="16" fill="#b8b8b8"/><path d="M5 21L11 29M11 21L5 29" stroke="#fff" stroke-width="2.5"/>
<path d="M16 20Q19 24 24 22V18L33 25L24 32V28Q17 29 16 20Z" fill="#ececec" stroke="#c0c0c0" stroke-width="2" stroke-linejoin="round"/></svg>
<svg class="r" style="left:778px;top:207px" width="23" height="23" viewBox="0 0 23 23"><defs><linearGradient id="gs" x1="0" y1="0" x2="0" y2="1"><stop offset="0" stop-color="#cdcdcd"/><stop offset="1" stop-color="#8e8e8e"/></linearGradient></defs>
<rect x="1.5" y="1.5" width="20" height="20" rx="3" fill="#e0e0e0" stroke="#a3a3a3" stroke-width="2.5"/><rect x="5" y="5" width="13" height="13" fill="url(#gs)"/></svg>
<svg class="r" style="left:815px;top:200px" width="26" height="34" viewBox="0 0 26 34"><path d="M1.5 1.5H24.5V31Q20 27 14 30Q7 33 1.5 28Z" fill="#eef3fb" stroke="#a89a6a" stroke-width="2"/>
<path d="M1.5 28Q7 33 14 30Q20 27 24.5 31" stroke="#8aa2cc" stroke-width="2" fill="none"/>
<g fill="#3aa65a"><circle cx="8" cy="8" r="3.5"/><circle cx="8" cy="16" r="3.5"/><circle cx="8" cy="24" r="3.5"/></g>
<g stroke="#5a78b8" stroke-width="2"><path d="M13 7H21M13 15H21M13 23H21"/></g></svg>
<svg class="r" style="left:855px;top:213px" width="14" height="8" viewBox="0 0 14 8"><path d="M0 0H14L7 8Z" fill="#2b2b2b"/></svg>
<svg class="r" style="left:890px;top:206px" width="26" height="14" viewBox="0 0 26 14"><path d="M1.5 1.5H24.5L13 12.5Z" fill="#fff" stroke="#6e6e6e" stroke-width="2.5" stroke-linejoin="round"/></svg>
<svg class="r" style="left:316px;top:298px" width="14" height="16" viewBox="0 0 14 16"><rect width="14" height="16" fill="#d9404f"/><path d="M4 5L10 11M10 5L4 11" stroke="#fff" stroke-width="2.6"/></svg>
<svg class="r" style="left:614px;top:298px" width="14" height="16" viewBox="0 0 14 16"><rect width="14" height="16" fill="#1f3d7a"/><rect x="2" y="2" width="10" height="12" fill="#3a5c9a"/><path d="M4 5L10 11M10 5L4 11" stroke="#fff" stroke-width="2.6"/></svg>
<svg class="r" style="left:17px;top:416px" width="20" height="14" viewBox="0 0 20 14"><path d="M2 2L10 10L18 2" stroke="#404040" stroke-width="3.2" fill="none"/></svg>
<svg class="r" style="left:45px;top:403px" width="32" height="32" viewBox="0 0 32 32"><rect x="2" y="2" width="16" height="18" fill="#f2f6fb" stroke="#a08535" stroke-width="2"/><path d="M6 5V12H12" stroke="#3d9e5e" stroke-width="2" fill="none"/>
<rect x="14" y="10" width="16" height="20" fill="#f2f6fb" stroke="#a08535" stroke-width="2"/><path d="M18 13V26H23M18 20H23" stroke="#3d9e5e" stroke-width="2" fill="none"/><g fill="#3d9e5e"><rect x="25" y="19" width="2" height="2"/><rect x="25" y="24" width="2" height="2"/></g>
<rect x="2" y="16" width="12" height="14" fill="#5cb47c" stroke="#109a40" stroke-width="2"/><path d="M4.5 23L7.5 27L12 18" stroke="#fff" stroke-width="2.5" fill="none"/></svg>
<svg class="r" style="left:78px;top:438px" width="31" height="31" viewBox="0 0 31 31"><rect x="7" y="1" width="22" height="26" fill="#f2f6fb" stroke="#a08535" stroke-width="2"/>
<rect x="10" y="4" width="2" height="20" fill="#3d9e5e"/><g fill="#3d9e5e"><rect x="12" y="10" width="10" height="2"/><rect x="12" y="16" width="10" height="2"/><rect x="12" y="22" width="10" height="2"/>
<rect x="24" y="10" width="2" height="2"/><rect x="24" y="16" width="2" height="2"/><rect x="24" y="22" width="2" height="2"/></g>
<g fill="#cfe6d6"><rect x="12" y="7" width="10" height="1"/><rect x="12" y="13" width="10" height="1"/><rect x="12" y="19" width="10" height="1"/></g>
<rect x="1" y="15" width="12" height="14" fill="#5cb47c" stroke="#109a40" stroke-width="2"/><path d="M3.5 22L6.5 26L11 17" stroke="#fff" stroke-width="2.5" fill="none"/></svg>
<svg class="r" style="left:78px;top:472px" width="31" height="31" viewBox="0 0 31 31"><rect x="7" y="1" width="22" height="26" fill="#f2f6fb" stroke="#a08535" stroke-width="2"/>
<rect x="10" y="4" width="2" height="20" fill="#3d9e5e"/><g fill="#3d9e5e"><rect x="12" y="10" width="10" height="2"/><rect x="12" y="16" width="10" height="2"/><rect x="12" y="22" width="10" height="2"/>
<rect x="24" y="10" width="2" height="2"/><rect x="24" y="16" width="2" height="2"/><rect x="24" y="22" width="2" height="2"/></g>
<g fill="#cfe6d6"><rect x="12" y="7" width="10" height="1"/><rect x="12" y="13" width="10" height="1"/><rect x="12" y="19" width="10" height="1"/></g>
<rect x="1" y="15" width="12" height="14" fill="#5cb47c" stroke="#109a40" stroke-width="2"/><path d="M3.5 22L6.5 26L11 17" stroke="#fff" stroke-width="2.5" fill="none"/></svg>
<svg class="r" style="left:964px;top:156px" width="23" height="29" viewBox="0 0 23 29"><defs><linearGradient id="jg964" x1="0" y1="0" x2="0" y2="1"><stop offset="0" stop-color="#fff"/><stop offset="1" stop-color="#dfe8f5"/></linearGradient></defs>
<path d="M1 1H16L22 7V28H1Z" fill="url(#jg964)" stroke="#9c7c30" stroke-width="2"/><path d="M15 1V8H22Z" fill="#e0c070"/>
<path d="M12 6V16Q12 22 7 22Q5 22 4 21" stroke="#3a6ea5" stroke-width="4" fill="none"/></svg>
<svg class="r" style="left:1236px;top:156px" width="23" height="29" viewBox="0 0 23 29"><defs><linearGradient id="jg1236" x1="0" y1="0" x2="0" y2="1"><stop offset="0" stop-color="#fff"/><stop offset="1" stop-color="#dfe8f5"/></linearGradient></defs>
<path d="M1 1H16L22 7V28H1Z" fill="url(#jg1236)" stroke="#c8b88a" stroke-width="2"/><path d="M15 1V8H22Z" fill="#e0c070"/>
<path d="M12 6V16Q12 22 7 22Q5 22 4 21" stroke="#8eaed0" stroke-width="4" fill="none"/></svg>
<svg class="r" style="left:1490px;top:156px" width="23" height="29" viewBox="0 0 23 29"><defs><linearGradient id="jg1490" x1="0" y1="0" x2="0" y2="1"><stop offset="0" stop-color="#fff"/><stop offset="1" stop-color="#dfe8f5"/></linearGradient></defs>
<path d="M1 1H16L22 7V28H1Z" fill="url(#jg1490)" stroke="#c8b88a" stroke-width="2"/><path d="M15 1V8H22Z" fill="#e0c070"/>
<path d="M12 6V16Q12 22 7 22Q5 22 4 21" stroke="#8eaed0" stroke-width="4" fill="none"/></svg>
<svg class="r" style="left:1742px;top:156px" width="23" height="29" viewBox="0 0 23 29"><defs><linearGradient id="jg1742" x1="0" y1="0" x2="0" y2="1"><stop offset="0" stop-color="#fff"/><stop offset="1" stop-color="#dfe8f5"/></linearGradient></defs>
<path d="M1 1H16L22 7V28H1Z" fill="url(#jg1742)" stroke="#c8b88a" stroke-width="2"/><path d="M15 1V8H22Z" fill="#e0c070"/>
<path d="M12 6V16Q12 22 7 22Q5 22 4 21" stroke="#8eaed0" stroke-width="4" fill="none"/></svg>
<svg class="r" style="left:1008px;top:204px" width="18" height="18" viewBox="0 0 18 18"><circle cx="9" cy="9" r="8" fill="#e6ebf3" stroke="#9aa6ba" stroke-width="1.8"/><rect x="4" y="8" width="10" height="2.2" fill="#4a4f66"/></svg>
<svg class="r" style="left:1008px;top:408px" width="18" height="18" viewBox="0 0 18 18"><circle cx="9" cy="9" r="8" fill="#e6ebf3" stroke="#9aa6ba" stroke-width="1.8"/><rect x="4" y="8" width="10" height="2.2" fill="#4a4f66"/></svg>
<svg class="r" style="left:1008px;top:510px" width="18" height="18" viewBox="0 0 18 18"><circle cx="9" cy="9" r="8" fill="#e6ebf3" stroke="#9aa6ba" stroke-width="1.8"/><rect x="4" y="8" width="10" height="2.2" fill="#4a4f66"/></svg>
<svg class="r" style="left:2041px;top:211px" width="14" height="11" viewBox="0 0 14 11"><path d="M2 8.5L6.5 3.5L11 8.5" stroke="#555" stroke-width="3" stroke-linejoin="miter" fill="none"/></svg>
</body></html>
